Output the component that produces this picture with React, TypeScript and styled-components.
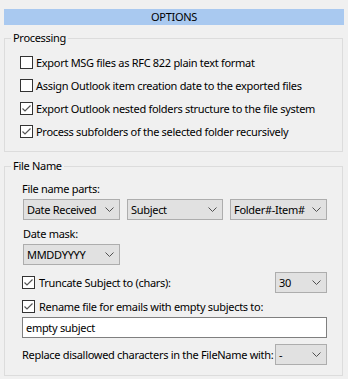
import styled, { createGlobalStyle } from 'styled-components';
import { FunctionComponent } from 'react';

const GlobalStyle = createGlobalStyle`
  html, body {
    margin: 0;
    padding: 0;
    background: #f0f0f0;
  }
  body {
    font-family: 'Noto Sans', 'Open Sans', sans-serif;
    font-size: 11px;
    letter-spacing: -0.3px;
    color: #000;
  }
`;

const Container = styled.div`
  width: 348px;
  height: 379px;
  box-sizing: border-box;
  padding: 9px 4px 0 4px;
  display: flex;
  flex-direction: column;
`;

const Header = styled.div`
  height: 16px;
  width: 340px;
  background: #a9c9f0;
  display: flex;
  align-items: center;
  justify-content: center;
  line-height: 16px;
`;

const GroupBox = styled.section<{ $top: number }>`
  position: relative;
  margin-top: ${(p) => p.$top}px;
  width: 339px;
  border: 1px solid #dcdcdc;
  box-sizing: border-box;
`;

const GroupLabel = styled.span`
  position: absolute;
  top: -9px;
  left: 6px;
  padding: 0 2px;
  background: #f0f0f0;
  line-height: 16px;
`;

const CheckList = styled.div`
  display: flex;
  flex-direction: column;
  padding: 12px 0 8px 15px;
`;

const CheckRow = styled.label<{ $height?: number; $gap?: number }>`
  display: flex;
  align-items: center;
  gap: ${(p) => p.$gap ?? 3}px;
  height: ${(p) => p.$height ?? 23}px;
  white-space: nowrap;
`;

const Box = styled.span`
  width: 13px;
  height: 13px;
  box-sizing: border-box;
  border: 1px solid #333333;
  background: #ffffff;
  display: flex;
  align-items: center;
  justify-content: center;
  flex-shrink: 0;

  svg {
    display: block;
  }
`;

const FileNameBody = styled.div`
  display: flex;
  flex-direction: column;
  padding: 14px 15px 10px 17px;
`;

const FieldLabel = styled.div<{ $top?: number; $left?: number }>`
  margin-top: ${(p) => p.$top ?? 0}px;
  margin-left: ${(p) => p.$left ?? 0}px;
  line-height: 15px;
  height: 15px;
`;

const PartsRow = styled.div`
  display: grid;
  grid-template-columns: 97px 96px 97px;
  gap: 7px;
  margin-top: 3px;
  margin-left: 1px;
`;

const Select = styled.div<{ $width?: number }>`
  width: ${(p) => (p.$width ? `${p.$width}px` : 'auto')};
  height: 21px;
  box-sizing: border-box;
  background: #e1e1e1;
  border: 1px solid #adadad;
  display: flex;
  align-items: center;
  justify-content: space-between;
  padding: 0 5px 0 3px;
  white-space: nowrap;
  flex-shrink: 0;
`;

const SplitRow = styled.div<{ $top: number }>`
  display: flex;
  align-items: center;
  justify-content: space-between;
  margin-top: ${(p) => p.$top}px;
`;

const TextInput = styled.div`
  height: 21px;
  box-sizing: border-box;
  background: #ffffff;
  border: 1px solid #7f7f7f;
  display: flex;
  align-items: center;
  padding: 0 3px;
  margin-top: 4px;
`;

const Chevron: FunctionComponent = () => (
  <svg width="9" height="5" viewBox="0 0 9 5">
    <polyline points="0.5,0.5 4.5,4.5 8.5,0.5" fill="none" stroke="#505050" strokeWidth="1" />
  </svg>
);

const CheckBox: FunctionComponent<{ checked?: boolean }> = ({ checked }) => (
  <Box>
    {checked && (
      <svg width="11" height="11" viewBox="0 0 11 11">
        <polyline points="1.5,5.5 4,8 9.5,2.5" fill="none" stroke="#555555" strokeWidth="1.2" />
      </svg>
    )}
  </Box>
);

const Dropdown: FunctionComponent<{ value: string; width?: number }> = ({ value, width }) => (
  <Select $width={width}>
    <span>{value}</span>
    <Chevron />
  </Select>
);

const App: FunctionComponent = () => {
  return (
    <Container>
      <GlobalStyle />
      <Header>OPTIONS</Header>

      <GroupBox $top={13}>
        <GroupLabel>Processing</GroupLabel>
        <CheckList>
          <CheckRow>
            <CheckBox />
            Export MSG files as RFC 822 plain text format
          </CheckRow>
          <CheckRow>
            <CheckBox />
            Assign Outlook item creation date to the exported files
          </CheckRow>
          <CheckRow>
            <CheckBox checked />
            Export Outlook nested folders structure to the file system
          </CheckRow>
          <CheckRow>
            <CheckBox checked />
            Process subfolders of the selected folder recursively
          </CheckRow>
        </CheckList>
      </GroupBox>

      <GroupBox $top={14}>
        <GroupLabel>File Name</GroupLabel>
        <FileNameBody>
          <FieldLabel>File name parts:</FieldLabel>
          <PartsRow>
            <Dropdown value="Date Received" />
            <Dropdown value="Subject" />
            <Dropdown value="Folder#-Item#" />
          </PartsRow>
          <FieldLabel $top={6} $left={1}>Date mask:</FieldLabel>
          <PartsRow>
            <Dropdown value="MMDDYYYY" />
          </PartsRow>

          <SplitRow $top={7}>
            <CheckRow $height={21} $gap={4}>
              <CheckBox checked />
              Truncate Subject to (chars):
            </CheckRow>
            <Dropdown value="30" width={52} />
          </SplitRow>

          <SplitRow $top={7}>
            <CheckRow $height={13} $gap={4}>
              <CheckBox checked />
              Rename file for emails with empty subjects to:
            </CheckRow>
          </SplitRow>

          <TextInput>empty subject</TextInput>

          <SplitRow $top={6}>
            <span>Replace disallowed characters in the FileName with:</span>
            <Dropdown value="-" width={52} />
          </SplitRow>
        </FileNameBody>
      </GroupBox>
    </Container>
  );
};

export default App;
